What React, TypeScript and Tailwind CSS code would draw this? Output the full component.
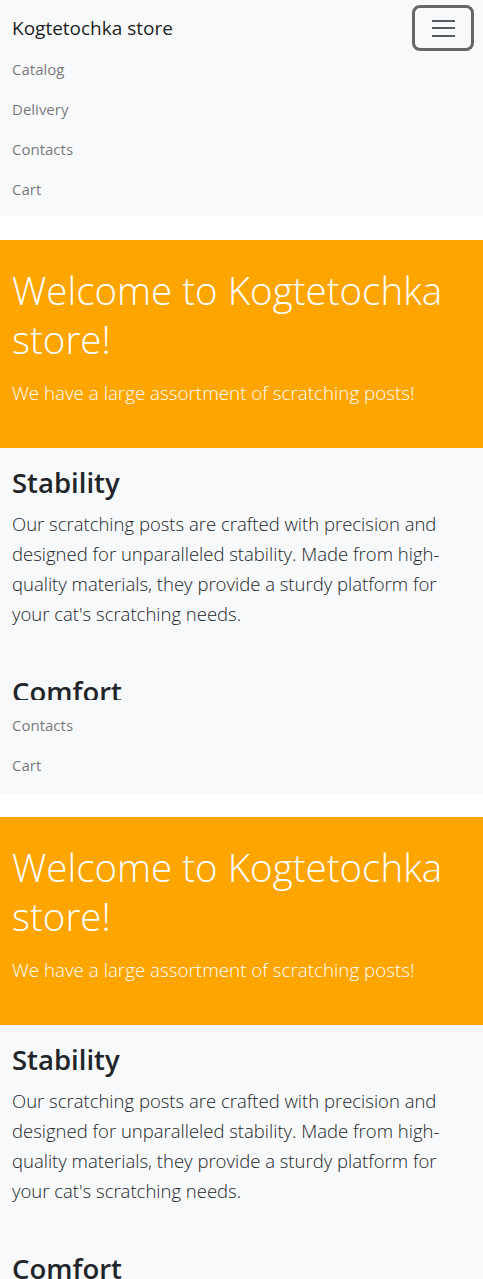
const font = { fontFamily: '"Open Sans", "Noto Sans", sans-serif' };

function NavLink({ label }: { label: string }) {
  return (
    <a href="#" className="flex h-10 items-center text-[15px] text-[rgba(0,0,0,0.55)]">
      {label}
    </a>
  );
}

function Hero() {
  return (
    <section className="mt-6 bg-[#ffa500] px-3 pt-[26px] pb-10 text-white">
      <h1 className="text-[38.5px] font-light leading-[49px]">Welcome to Kogtetochka store!</h1>
      <p className="mt-[14px] text-[18.8px] font-light leading-[30px]">
        We have a large assortment of scratching posts!
      </p>
    </section>
  );
}

function Features() {
  return (
    <section className="bg-[#f8f9fa] px-3 pt-[18px] pb-10 text-[#212529]">
      <h2 className="text-[27.5px] font-semibold leading-[34px]">Stability</h2>
      <p className="mt-[9px] text-[18.5px] font-light leading-[30px]">
        Our scratching posts are crafted with precision and designed for unparalleled stability. Made from high-quality
        materials, they provide a sturdy platform for your cat's scratching needs.
      </p>
      <h2 className="mt-[46px] text-[27.5px] font-semibold leading-[34px]">Comfort</h2>
      <p className="mt-[9px] text-[18.5px] font-light leading-[30px]">
        Soft, durable surfaces keep your cat happy and comfortable while protecting your furniture.
      </p>
    </section>
  );
}

export default function App() {
  return (
    <div className="h-[1279px] overflow-hidden bg-white" style={font}>
      <div className="h-[700px] overflow-hidden">
        <nav className="bg-[#f8f9fa] px-3 pt-[7px] pb-[7px]">
          <div className="flex h-[42px] items-center justify-between">
            <a href="#" className="text-[19px] leading-[30px] text-[rgba(0,0,0,0.9)]">
              Kogtetochka store
            </a>
            <button className="-mr-[3px] flex h-[46px] w-[62px] flex-col items-center justify-center gap-[5.5px] rounded-[8px] border-[3px] border-[#666]">
              <span className="h-[2px] w-[23px] bg-[#595c5f]" />
              <span className="h-[2px] w-[23px] bg-[#595c5f]" />
              <span className="h-[2px] w-[23px] bg-[#595c5f]" />
            </button>
          </div>
          <div className="flex flex-col">
            <NavLink label="Catalog" />
            <NavLink label="Delivery" />
            <NavLink label="Contacts" />
            <NavLink label="Cart" />
          </div>
        </nav>
        <Hero />
        <Features />
      </div>
      <div>
        <nav className="bg-[#f8f9fa] px-3 pt-[5px] pb-2">
          <div className="flex flex-col">
            <NavLink label="Contacts" />
            <NavLink label="Cart" />
          </div>
        </nav>
        <Hero />
        <Features />
      </div>
    </div>
  );
}
